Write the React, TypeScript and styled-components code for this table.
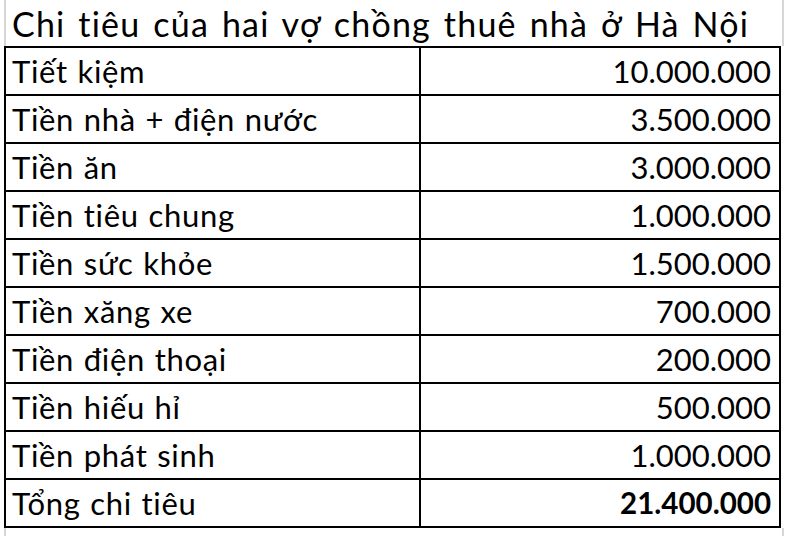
import React from "react";
import styled, { createGlobalStyle } from "styled-components";

const Global = createGlobalStyle`
  html, body { margin: 0; padding: 0; background: #ffffff; }
  body { font-family: Lato, "Noto Sans", sans-serif; color: #000; }
`;

const Sheet = styled.div`
  width: 788px;
  height: 536px;
  overflow: hidden;
  padding-left: 4px;
  box-sizing: border-box;
`;

const TitleRow = styled.div`
  width: 780px;
  height: 46px;
  box-sizing: border-box;
  border-left: 2px solid #d6d6d6;
  border-right: 2px solid #d6d6d6;
  display: flex;
  align-items: flex-end;
  padding-left: 6px;
  padding-bottom: 2px;
`;

const Title = styled.h1`
  margin: 0;
  font-weight: 400;
  font-size: 34px;
  line-height: 40px;
  letter-spacing: 1.2px;
  word-spacing: 3px;
  white-space: nowrap;
`;

const Table = styled.div`
  display: grid;
  grid-template-columns: 413px 358px;
  grid-auto-rows: 46px;
  gap: 2px;
  padding: 2px;
  width: fit-content;
  background: #000;
`;

const Label = styled.div`
  background: #fff;
  font-size: 31px;
  line-height: 46px;
  letter-spacing: 0.7px;
  word-spacing: 1px;
  white-space: nowrap;
  padding-left: 6px;
`;

const Amount = styled.div<{ $bold?: boolean }>`
  background: #fff;
  font-size: ${(p) => (p.$bold ? "29.5px" : "31px")};
  line-height: 46px;
  white-space: nowrap;
  padding-right: 8px;
  text-align: right;
  font-weight: ${(p) => (p.$bold ? 700 : 400)};
`;

const Footer = styled.div`
  width: 780px;
  height: 12px;
  box-sizing: border-box;
  border-left: 2px solid #d6d6d6;
  border-right: 2px solid #d6d6d6;
`;

const rows: [string, string][] = [
  ["Tiết kiệm", "10.000.000"],
  ["Tiền nhà + điện nước", "3.500.000"],
  ["Tiền ăn", "3.000.000"],
  ["Tiền tiêu chung", "1.000.000"],
  ["Tiền sức khỏe", "1.500.000"],
  ["Tiền xăng xe", "700.000"],
  ["Tiền điện thoại", "200.000"],
  ["Tiền hiếu hỉ", "500.000"],
  ["Tiền phát sinh", "1.000.000"],
];

export default function App() {
  return (
    <>
      <Global />
      <Sheet>
        <TitleRow>
          <Title>Chi tiêu của hai vợ chồng thuê nhà ở Hà Nội</Title>
        </TitleRow>
        <Table>
          {rows.map(([label, value]) => (
            <React.Fragment key={label}>
              <Label>{label}</Label>
              <Amount>{value}</Amount>
            </React.Fragment>
          ))}
          <Label>Tổng chi tiêu</Label>
          <Amount $bold>21.400.000</Amount>
        </Table>
        <Footer />
      </Sheet>
    </>
  );
}
